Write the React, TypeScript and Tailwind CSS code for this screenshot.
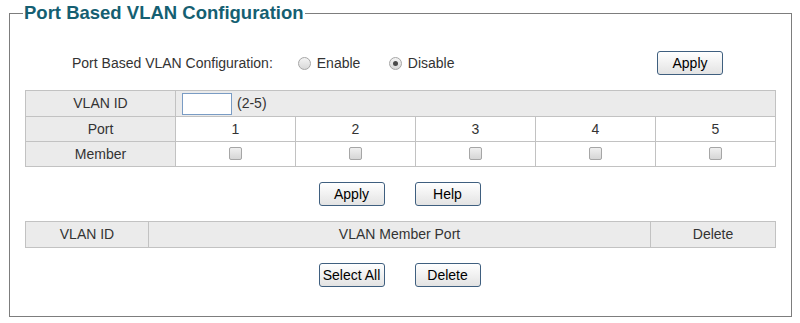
import React from "react";

function Btn({ label }: { label: string }) {
  return (
    <button className="h-[24px] w-[66px] rounded-[3px] border border-[#3f5f7f] bg-gradient-to-b from-[#ffffff] to-[#e3e3e3] text-[14px] leading-none text-black">
      {label}
    </button>
  );
}

function Radio({ checked }: { checked?: boolean }) {
  return (
    <span className="flex h-[13px] w-[13px] items-center justify-center rounded-full border border-[#a6a6a6] bg-gradient-to-b from-[#f4f4f4] to-[#d8d8d8]">
      {checked && <span className="h-[5px] w-[5px] rounded-full bg-[#4a4a4a]" />}
    </span>
  );
}

function Check() {
  return (
    <span className="inline-block h-[13px] w-[13px] rounded-[2px] border border-[#a6a6a6] bg-gradient-to-b from-[#f0f0f0] to-[#d6d6d6] align-middle" />
  );
}

export default function App() {
  const ports = [1, 2, 3, 4, 5];
  const cell = "border border-[#c2c2c2] text-center p-0";
  return (
    <div
      className="h-[323px] w-[800px] bg-white text-[14px] text-[#333]"
      style={{ fontFamily: '"Liberation Sans", Arial, sans-serif' }}
    >
      <fieldset className="ml-[9px] h-[317px] w-[781px] border border-[#7d7d7d] px-[15px]">
        <legend className="-ml-[2px] px-[1px] text-[18.5px] font-bold leading-[26px] text-[#155f72]">
          Port Based VLAN Configuration
        </legend>

        <div className="mt-[25px] flex h-[24px] items-center">
          <span className="pl-[47px]">Port Based VLAN Configuration:</span>
          <span className="ml-[25px] flex w-[91px] items-center gap-[6px]">
            <Radio />
            <span>Enable</span>
          </span>
          <span className="flex items-center gap-[6px]">
            <Radio checked />
            <span>Disable</span>
          </span>
          <span className="ml-auto mr-[53px]">
            <Btn label="Apply" />
          </span>
        </div>

        <table className="mt-[15px] w-[750px] table-fixed border-collapse">
          <colgroup>
            <col className="w-[150px]" />
            <col className="w-[120px]" />
            <col className="w-[120px]" />
            <col className="w-[120px]" />
            <col className="w-[120px]" />
            <col className="w-[120px]" />
          </colgroup>
          <tbody>
            <tr className="h-[26px] bg-[#ebebeb]">
              <td className={cell}>VLAN ID</td>
              <td className="border border-[#c2c2c2] p-0 pl-[6px] text-left" colSpan={5}>
                <span className="flex items-center gap-[5px]">
                  <span className="inline-block h-[22px] w-[50px] border border-[#7a9cc4] bg-white" />
                  <span>(2-5)</span>
                </span>
              </td>
            </tr>
            <tr className="h-[25px]">
              <td className={`${cell} bg-[#ebebeb]`}>Port</td>
              {ports.map((p) => (
                <td key={p} className={cell}>
                  {p}
                </td>
              ))}
            </tr>
            <tr className="h-[25px]">
              <td className={`${cell} bg-[#ebebeb]`}>Member</td>
              {ports.map((p) => (
                <td key={p} className={`${cell} pb-[3px]`}>
                  <Check />
                </td>
              ))}
            </tr>
          </tbody>
        </table>

        <div className="mt-[15px] flex justify-center gap-[30px] pr-[2px]">
          <Btn label="Apply" />
          <Btn label="Help" />
        </div>

        <table className="mt-[15px] w-[750px] table-fixed border-collapse bg-[#ebebeb]">
          <colgroup>
            <col className="w-[123px]" />
            <col className="w-[502px]" />
            <col className="w-[125px]" />
          </colgroup>
          <tbody>
            <tr className="h-[26px]">
              <td className={cell}>VLAN ID</td>
              <td className={cell}>VLAN Member Port</td>
              <td className={cell}>Delete</td>
            </tr>
          </tbody>
        </table>

        <div className="mt-[15px] flex justify-center gap-[30px] pr-[2px]">
          <Btn label="Select All" />
          <Btn label="Delete" />
        </div>
      </fieldset>
    </div>
  );
}
